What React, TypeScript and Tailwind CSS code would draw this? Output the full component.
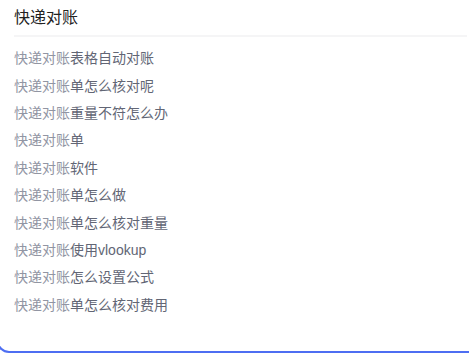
import React from 'react'

const items: string[] = [
  '表格自动对账',
  '单怎么核对呢',
  '重量不符怎么办',
  '单',
  '软件',
  '单怎么做',
  '单怎么核对重量',
  '使用vlookup',
  '怎么设置公式',
  '单怎么核对费用',
]

const query = '快递对账'

const App: React.FC = () => {
  return (
    <div className="w-[469px] h-[353px] overflow-hidden bg-white font-['Liberation_Sans','Noto_Sans_CJK_SC',sans-serif]">
      {/* 下拉建议框 */}
      <div className="-ml-[3px] h-[353px] border-l-2 border-b-2 border-[#4e6ef2] rounded-bl-[12px] bg-white pl-[15px] pr-[2px]">
        <div className="h-[35px] pt-[7px] text-[16px] leading-[22px] text-[#222]">{query}</div>
        <div className="h-[2px] bg-[#f5f5f6]" />
        <ul className="pt-[8px]">
          {items.map((rest) => (
            <li key={rest} className="h-[27.4px] flex items-center text-[14px] text-[#626675]">
              <span className="text-[#9195a3]">{query}</span>
              <span>{rest}</span>
            </li>
          ))}
        </ul>
      </div>
    </div>
  )
}

export default App
